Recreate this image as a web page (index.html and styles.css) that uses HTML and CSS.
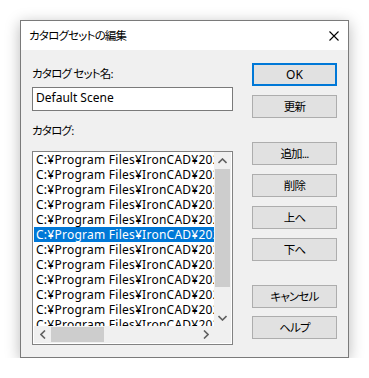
FILE: index.html
```html
<!DOCTYPE html>
<html lang="ja">
<head>
<meta charset="utf-8">
<link rel="stylesheet" href="styles.css">
</head>
<body>
<div class="dialog">
  <div class="titlebar">
    <span class="title ja">カタログセットの編集</span>
    <svg class="close" width="10" height="10" viewBox="0 0 10 10"><path d="M0.5 0.5 L9.5 9.5 M9.5 0.5 L0.5 9.5" stroke="#000" stroke-width="1.1" fill="none"/></svg>
  </div>
  <div class="content">
    <div class="left">
      <div class="label ja">カタログ セット名:</div>
      <div class="textbox">Default Scene</div>
      <div class="label second ja">カタログ:</div>
      <div class="listbox">
        <div class="viewport">
          <div class="row">C:¥Program Files¥IronCAD¥2020</div>
          <div class="row">C:¥Program Files¥IronCAD¥2020</div>
          <div class="row">C:¥Program Files¥IronCAD¥2020</div>
          <div class="row">C:¥Program Files¥IronCAD¥2020</div>
          <div class="row">C:¥Program Files¥IronCAD¥2020</div>
          <div class="row selected">C:¥Program Files¥IronCAD¥2020</div>
          <div class="row">C:¥Program Files¥IronCAD¥2020</div>
          <div class="row">C:¥Program Files¥IronCAD¥2020</div>
          <div class="row">C:¥Program Files¥IronCAD¥2020</div>
          <div class="row">C:¥Program Files¥IronCAD¥2020</div>
          <div class="row">C:¥Program Files¥IronCAD¥2020</div>
          <div class="row">C:¥Program Files¥IronCAD¥2020</div>
        </div>
        <div class="vscroll">
          <div class="sbtn"><svg width="9" height="6" viewBox="0 0 9 6"><path d="M0.5 5 L4.5 1 L8.5 5" stroke="#606060" stroke-width="1.6" fill="none"/></svg></div>
          <div class="vtrack"><div class="vthumb"></div></div>
          <div class="sbtn"><svg width="9" height="6" viewBox="0 0 9 6"><path d="M0.5 1 L4.5 5 L8.5 1" stroke="#606060" stroke-width="1.6" fill="none"/></svg></div>
        </div>
        <div class="hscroll">
          <div class="sbtn"><svg width="6" height="9" viewBox="0 0 6 9"><path d="M5 0.5 L1 4.5 L5 8.5" stroke="#606060" stroke-width="1.6" fill="none"/></svg></div>
          <div class="htrack"><div class="hthumb"></div></div>
          <div class="sbtn"><svg width="6" height="9" viewBox="0 0 6 9"><path d="M1 0.5 L5 4.5 L1 8.5" stroke="#606060" stroke-width="1.6" fill="none"/></svg></div>
        </div>
        <div class="corner"></div>
      </div>
    </div>
    <div class="right">
      <div class="btn default">OK</div>
      <div class="btn ja">更新</div>
      <div class="btn gap ja">追加...</div>
      <div class="btn ja">削除</div>
      <div class="btn ja">上へ</div>
      <div class="btn ja">下へ</div>
      <div class="btn gap ja">キャンセル</div>
      <div class="btn tight ja">ヘルプ</div>
    </div>
  </div>
</div>
</body>
</html>
```
FILE: styles.css
```css
html, body {
  margin: 0;
  padding: 0;
  background: #ffffff;
}
body {
  padding: 20px 0 0 20px;
  font-family: "Noto Sans", "Noto Sans CJK JP", sans-serif;
  font-size: 12px;
  font-feature-settings: "palt";
  color: #000;
}
.ja {
  font-size: 11.5px;
  letter-spacing: -0.8px;
}
.dialog {
  box-sizing: border-box;
  width: 329px;
  height: 338px;
  border: 1px solid #7a7a7a;
  background: #f0f0f0;
  box-shadow: 0 3px 14px rgba(0, 0, 0, 0.28);
}
.titlebar {
  height: 29px;
  background: #ffffff;
  display: flex;
  align-items: center;
  padding: 0 9px 0 8px;
}
.title {
  line-height: 15px;
}
.close {
  margin-left: auto;
  display: block;
}
.content {
  display: flex;
  padding: 0 10px 0 11px;
}
.left {
  width: 201px;
  padding-top: 16px;
  display: flex;
  flex-direction: column;
}
.label {
  line-height: 15px;
  height: 15px;
}
.textbox {
  box-sizing: border-box;
  margin-top: 6px;
  height: 24px;
  border: 1px solid #7a7a7a;
  background: #fff;
  padding-left: 3px;
  line-height: 20px;
}
.label.second {
  margin-top: 12px;
}
.listbox {
  box-sizing: border-box;
  margin-top: 13px;
  width: 201px;
  height: 194px;
  border: 1px solid #828282;
  background: #fff;
  display: grid;
  grid-template-columns: 180px 17px;
  grid-template-rows: 174px 17px;
  padding: 0 1px 1px 1px;
}
.viewport {
  overflow: hidden;
}
.row {
  height: 15px;
  line-height: 15px;
  white-space: nowrap;
  overflow: hidden;
  padding-left: 2px;
  letter-spacing: 0.25px;
}
.row.selected {
  background: #0078d7;
  color: #fff;
}
.vscroll {
  background: #f0f0f0;
  display: flex;
  flex-direction: column;
}
.vscroll .sbtn {
  height: 17px;
  display: flex;
  align-items: center;
  justify-content: center;
}
.vtrack {
  flex: 1;
}
.vthumb {
  margin: 0 1px;
  height: 118px;
  background: #cdcdcd;
}
.hscroll {
  background: #f0f0f0;
  display: flex;
}
.hscroll .sbtn {
  width: 17px;
  display: flex;
  align-items: center;
  justify-content: center;
}
.htrack {
  flex: 1;
  display: flex;
  align-items: center;
}
.hthumb {
  width: 53px;
  height: 15px;
  background: #cdcdcd;
}
.corner {
  background: #f0f0f0;
}
.right {
  width: 85px;
  margin-left: 19px;
  padding-top: 13px;
  display: flex;
  flex-direction: column;
}
.btn {
  box-sizing: border-box;
  height: 23px;
  border: 1px solid #adadad;
  background: #e1e1e1;
  display: flex;
  align-items: center;
  justify-content: center;
  margin-bottom: 9px;
  line-height: 15px;
}
.btn.default {
  border: 2px solid #0078d7;
}
.btn.gap {
  margin-top: 15px;
}
.btn.tight {
  margin-top: -1px;
}
```
